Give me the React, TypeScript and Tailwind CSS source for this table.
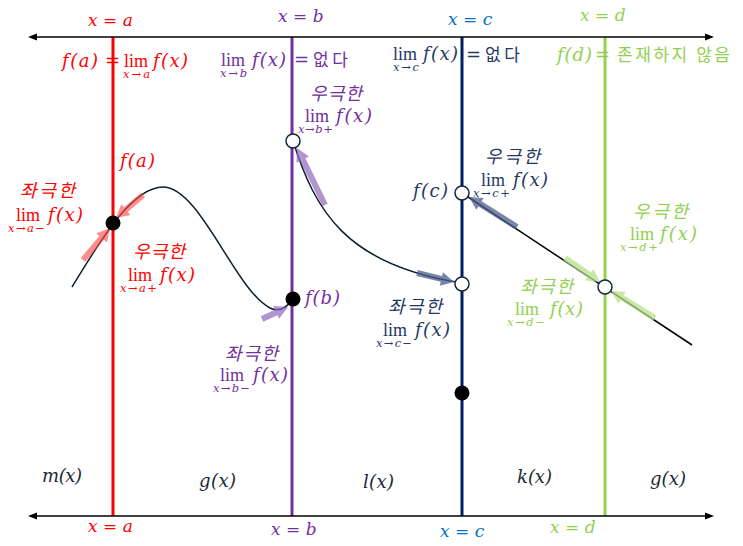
const MATH = "'DejaVu Serif', 'Liberation Serif', serif"
const SERIF = "'Liberation Serif', 'DejaVu Serif', serif"
const KR = "'Noto Sans CJK KR', 'Noto Sans', sans-serif"

const RED = "#ff0000"
const PURPLE = "#7030a0"
const NAVY = "#1f3864"
const BLUE = "#0070c0"
const GREEN = "#92d050"
const INK = "#1c2838"

type TProps = {
  x: number
  y: number
  c: string
  len?: number
  s?: number
  kr?: boolean
  up?: boolean
  roman?: boolean
  children: string
}

function T({ x, y, c, len, s = 18, kr, up, roman, children }: TProps) {
  return (
    <text
      x={x}
      y={y}
      fill={c}
      fontSize={s}
      fontFamily={kr ? KR : roman ? SERIF : MATH}
      fontStyle={up ? "normal" : "italic"}
      textLength={len}
      lengthAdjust="spacing"
    >
      {children}
    </text>
  )
}

// lim with subscript, then f(x)
function Lim({ x, y, sub, subX, subLen, fx, fLen = 35, c }: {
  x: number; y: number; sub: string; subX: number; subLen: number; fx: number; fLen?: number; c: string
}) {
  return (
    <g>
      <T x={x} y={y} c={c} up roman s={18}>lim</T>
      <T x={subX} y={y + 11} c={c} s={11.5} len={subLen}>{sub}</T>
      <T x={fx} y={y} c={c} s={18} len={fLen}>f(x)</T>
    </g>
  )
}

function arrow(x1: number, y1: number, x2: number, y2: number, w = 6, hw = 14, hl = 13) {
  const L = Math.hypot(x2 - x1, y2 - y1)
  const dx = (x2 - x1) / L
  const dy = (y2 - y1) / L
  const nx = -dy
  const ny = dx
  const bx = x2 - dx * hl
  const by = y2 - dy * hl
  const p = [
    [x1 + nx * w / 2, y1 + ny * w / 2],
    [bx + nx * w / 2, by + ny * w / 2],
    [bx + nx * hw / 2, by + ny * hw / 2],
    [x2, y2],
    [bx - nx * hw / 2, by - ny * hw / 2],
    [bx - nx * w / 2, by - ny * w / 2],
    [x1 - nx * w / 2, y1 - ny * w / 2],
  ]
  return p.map(q => q.join(",")).join(" ")
}

function Axis({ y }: { y: number }) {
  return (
    <g>
      <line x1={32} y1={y} x2={710} y2={y} stroke="#000" strokeWidth={1.5} />
      <polygon points={`28,${y} 37,${y - 3.5} 37,${y + 3.5}`} fill="#000" />
      <polygon points={`714,${y} 705,${y - 3.5} 705,${y + 3.5}`} fill="#000" />
    </g>
  )
}

export default function App() {
  return (
    <div className="w-[743px] h-[546px] bg-white overflow-hidden">
      <svg width={743} height={546} viewBox="0 0 743 546">
        {/* vertical lines */}
        <line x1={113} y1={37} x2={113} y2={516} stroke={RED} strokeWidth={3} />
        <line x1={292} y1={37} x2={292} y2={516} stroke={PURPLE} strokeWidth={3} />
        <line x1={462} y1={37} x2={462} y2={516} stroke="#002060" strokeWidth={3} />
        <line x1={605} y1={37} x2={605} y2={516} stroke={GREEN} strokeWidth={3} />

        <Axis y={37} />
        <Axis y={516} />

        {/* curves */}
        <path
          d="M72,287 C95,250 130,187 163,187 C200,187 235,290 270,308 C280,313 288,306 293,299"
          fill="none" stroke="#0d1f2d" strokeWidth={1.5}
        />
        <path d="M293,141 C315,210 345,265 462,283" fill="none" stroke="#0d1f2d" strokeWidth={1.5} />
        <line x1={462} y1={193} x2={692} y2={345} stroke="#000" strokeWidth={1.5} />

        {/* arrows */}
        <polygon points={arrow(83, 260, 110, 228)} fill="#ff4040" opacity={0.6} />
        <polygon points={arrow(143, 195, 116, 218)} fill="#ff4040" opacity={0.6} />
        <polygon points={arrow(325, 205, 297, 148)} fill="#8e68bd" opacity={0.7} />
        <polygon points={arrow(262, 319, 288, 307)} fill="#8e68bd" opacity={0.7} />
        <polygon points={arrow(417, 273, 454, 282)} fill="#4b5e8c" opacity={0.75} />
        <polygon points={arrow(517, 227, 469, 197)} fill="#4b5e8c" opacity={0.75} />
        <polygon points={arrow(565, 258, 600, 282)} fill="#b5e08e" opacity={0.75} />
        <polygon points={arrow(655, 318, 611, 291)} fill="#b5e08e" opacity={0.75} />

        {/* points */}
        <circle cx={113} cy={223} r={7.5} fill="#000" />
        <circle cx={293} cy={299} r={7.5} fill="#000" />
        <circle cx={462} cy={393} r={7.5} fill="#000" />
        <circle cx={293} cy={141} r={7} fill="#fff" stroke="#12263a" strokeWidth={1.5} />
        <circle cx={462} cy={193} r={7} fill="#fff" stroke="#12263a" strokeWidth={1.5} />
        <circle cx={462} cy={284} r={7} fill="#fff" stroke="#12263a" strokeWidth={1.5} />
        <circle cx={605} cy={287} r={7} fill="#fff" stroke="#12263a" strokeWidth={1.5} />

        {/* top labels */}
        <T x={88} y={26} c={RED} s={17}>x = a</T>
        <T x={278} y={22} c={PURPLE} s={17}>x = b</T>
        <T x={448} y={25} c={BLUE} s={17}>x = c</T>
        <T x={580} y={21} c={GREEN} s={17}>x = d</T>

        {/* bottom labels */}
        <T x={88} y={532} c={RED} s={17}>x = a</T>
        <T x={271} y={535} c={PURPLE} s={17}>x = b</T>
        <T x={440} y={537} c={BLUE} s={17}>x = c</T>
        <T x={550} y={533} c={GREEN} s={17}>x = d</T>

        {/* top row statements */}
        <T x={62} y={67} c={RED} len={36}>f(a)</T>
        <T x={105} y={67} c={RED} up>=</T>
        <Lim x={124} y={67} sub="x→a" subX={123} subLen={27} fx={153} c={RED} />

        <Lim x={221} y={66} sub="x→b" subX={220} subLen={27} fx={252} fLen={34} c={PURPLE} />
        <T x={294} y={66} c={PURPLE} up>=</T>
        <T x={313} y={66} c={PURPLE} kr up s={17} len={35}>없다</T>

        <Lim x={393} y={60} sub="x→c" subX={393} subLen={26} fx={423} c={NAVY} />
        <T x={466} y={61} c={NAVY} up>=</T>
        <T x={485} y={61} c={NAVY} kr up s={17} len={35}>없다</T>

        <T x={557} y={61} c={GREEN} len={35}>f(d)</T>
        <T x={595} y={61} c={GREEN} up>=</T>
        <T x={617} y={61} c={GREEN} kr up s={17} len={113}>존재하지 않음</T>

        {/* red limits */}
        <T x={120} y={167} c={RED} len={35}>f(a)</T>
        <T x={20} y={197} c={RED} kr s={18} len={55}>좌극한</T>
        <Lim x={16} y={221} sub="x→a−" subX={8} subLen={37} fx={48} c={RED} />
        <T x={133} y={258} c={RED} kr s={18} len={52}>우극한</T>
        <Lim x={128} y={281} sub="x→a+" subX={120} subLen={37} fx={160} c={RED} />

        {/* purple limits */}
        <T x={310} y={100} c={PURPLE} kr s={18} len={52}>우극한</T>
        <Lim x={305} y={122} sub="x→b+" subX={298} subLen={35} fx={336} fLen={36} c={PURPLE} />
        <T x={305} y={304} c={PURPLE} len={35}>f(b)</T>
        <T x={225} y={360} c={PURPLE} kr s={18} len={53}>좌극한</T>
        <Lim x={220} y={381} sub="x→b−" subX={213} subLen={37} fx={253} c={PURPLE} />

        {/* navy limits */}
        <T x={413} y={197} c={NAVY} len={35}>f(c)</T>
        <T x={485} y={163} c={NAVY} kr s={18} len={55}>우극한</T>
        <Lim x={481} y={186} sub="x→c+" subX={473} subLen={37} fx={513} c={NAVY} />
        <T x={388} y={313} c={NAVY} kr s={18} len={54}>좌극한</T>
        <Lim x={383} y={336} sub="x→c−" subX={376} subLen={36} fx={415} c={NAVY} />

        {/* green limits */}
        <T x={633} y={218} c={GREEN} kr s={18} len={55}>우극한</T>
        <Lim x={630} y={240} sub="x→d+" subX={620} subLen={38} fx={660} fLen={37} c={GREEN} />
        <T x={520} y={293} c={GREEN} kr s={18} len={53}>좌극한</T>
        <Lim x={515} y={315} sub="x→d−" subX={507} subLen={38} fx={550} fLen={33} c={GREEN} />

        {/* piece functions */}
        <T x={42} y={482} c={INK} len={40}>m(x)</T>
        <T x={199} y={487} c={INK} len={37}>g(x)</T>
        <T x={363} y={488} c={INK} len={31}>l(x)</T>
        <T x={517} y={483} c={INK} len={35}>k(x)</T>
        <T x={650} y={485} c={INK} len={36}>g(x)</T>
      </svg>
    </div>
  )
}
